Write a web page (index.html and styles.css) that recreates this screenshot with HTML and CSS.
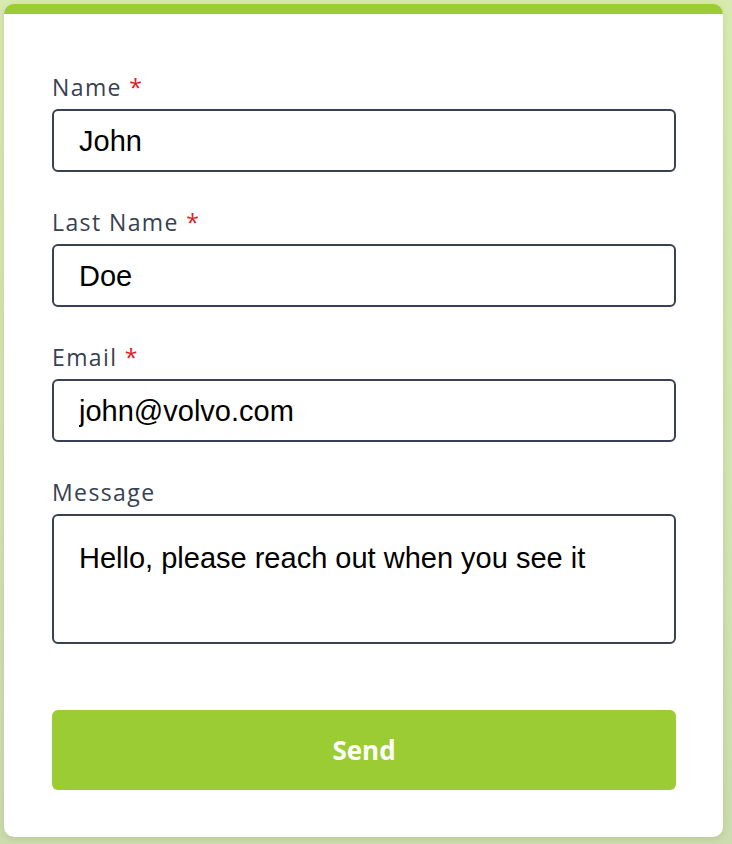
FILE: index.html
```html
<!DOCTYPE html>
<html>
<head>
    <meta charset="UTF-8">
    <title>Contact</title>
    <link rel="stylesheet" href="styles.css">
</head>
<body>
    <div class="card">
        <form class="contact-form">
            <div class="field">
                <label>Name <span class="required">*</span></label>
                <input type="text" value="John">
            </div>
            <div class="field">
                <label>Last Name <span class="required">*</span></label>
                <input type="text" value="Doe">
            </div>
            <div class="field">
                <label>Email <span class="required">*</span></label>
                <input type="text" value="john@volvo.com">
            </div>
            <div class="field">
                <label>Message</label>
                <textarea>Hello, please reach out when you see it</textarea>
            </div>
            <button type="button" class="send-btn">Send</button>
        </form>
    </div>
</body>
</html>
```

FILE: styles.css
```css
html, body {
    height: 100%;
}
body {
    margin: 0;
    padding: 4px 9px 7px 4px;
    box-sizing: border-box;
    background: linear-gradient(180deg, #d9eab0 0%, #d3e3b2 60%, #cddcae 100%);
    font-family: 'Open Sans', sans-serif;
}
.card {
    background-color: #ffffff;
    border-top: 10px solid #9bcc34;
    border-radius: 10px;
    height: 100%;
    box-sizing: border-box;
    padding: 58px 47px 0 48px;
    box-shadow: 0 2px 6px rgba(120, 140, 80, 0.25);
}
.contact-form {
    display: flex;
    flex-direction: column;
}
.field {
    display: flex;
    flex-direction: column;
    margin-bottom: 35px;
}
.field label {
    font-size: 23px;
    line-height: 30px;
    letter-spacing: 1.4px;
    color: #374151;
    margin-bottom: 7px;
}
.required {
    color: #e02020;
}
.field input,
.field textarea {
    font-family: 'Liberation Sans', Arial, sans-serif;
    font-size: 29px;
    color: #000000;
    border: 2px solid #374151;
    border-radius: 6px;
    padding: 0 25px;
    box-sizing: border-box;
    outline: none;
}
.field input {
    height: 63px;
    padding-top: 2px;
}
.field textarea {
    height: 130px;
    padding-top: 25px;
    line-height: 34px;
    resize: none;
}
.field:nth-child(4) {
    margin-bottom: 66px;
}
.send-btn {
    height: 80px;
    border: none;
    border-radius: 6px;
    background-color: #9bcc34;
    color: #ffffff;
    font-family: 'Open Sans', sans-serif;
    font-weight: bold;
    font-size: 26px;
    cursor: pointer;
}
```
